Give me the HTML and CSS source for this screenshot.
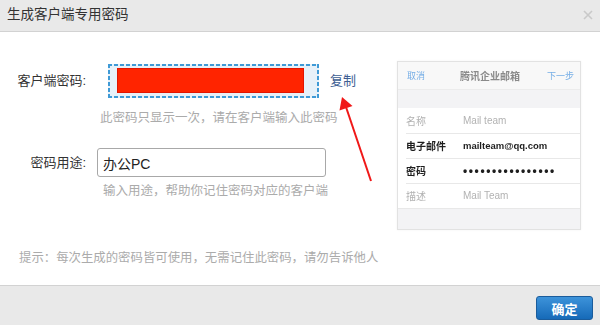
FILE: index.html
```html
<!DOCTYPE html>
<html lang="zh-CN">
<head>
  <meta charset="UTF-8" />
  <title>生成客户端专用密码</title>
  <link rel="stylesheet" href="styles.css">
</head>
<body>

  <div class="dialog">
    <div class="dialog-header">
      <span class="dialog-title">生成客户端专用密码</span>
      <span class="close-btn">
        <svg width="10" height="10" viewBox="0 0 10 10">
          <path d="M1 1 L9 9 M9 1 L1 9" stroke="#c9c9c9" stroke-width="1.6" fill="none" />
        </svg>
      </span>
    </div>

    <div class="dialog-body">
      <div class="form">
        <div class="form-row">
          <label class="form-label">客户端密码:</label>
          <div class="pwd-box"><div class="pwd-mask"></div></div>
          <a class="copy-link">复制</a>
        </div>
        <p class="form-hint hint-pwd">此密码只显示一次，请在客户端输入此密码</p>

        <div class="form-row row-usage">
          <label class="form-label">密码用途:</label>
          <input class="usage-input" type="text" value="办公PC">
        </div>
        <p class="form-hint hint-usage">输入用途，帮助你记住密码对应的客户端</p>

        <p class="tip">提示：每次生成的密码皆可使用，无需记住此密码，请勿告诉他人</p>
      </div>

      <!-- phone mail setup preview -->
      <div class="preview">
        <div class="preview-nav">
          <span class="nav-cancel">取消</span>
          <span class="nav-title">腾讯企业邮箱</span>
          <span class="nav-next">下一步</span>
        </div>
        <div class="preview-band"></div>
        <div class="preview-row muted">
          <span class="row-key">名称</span><span class="row-val">Mail team</span>
        </div>
        <div class="preview-row strong">
          <span class="row-key">电子邮件</span><span class="row-val">mailteam@qq.com</span>
        </div>
        <div class="preview-row strong">
          <span class="row-key">密码</span><span class="row-val dots">••••••••••••••••</span>
        </div>
        <div class="preview-row muted">
          <span class="row-key">描述</span><span class="row-val">Mail Team</span>
        </div>
        <div class="preview-bottom"></div>
      </div>
    </div>

    <div class="dialog-footer">
      <button class="btn-primary">确定</button>
    </div>

    <svg class="arrow" width="600" height="325" viewBox="0 0 600 325">
      <line x1="371" y1="181" x2="346" y2="107" stroke="#f01818" stroke-width="2" />
      <polygon points="342,97 352.5,106 339.5,110.5" fill="#f01818" />
    </svg>
  </div>

</body>
</html>
```

FILE: styles.css
```css
* {
  margin: 0;
  padding: 0;
  box-sizing: border-box;
}

body {
  font-family: "Liberation Sans", "Noto Sans CJK SC", sans-serif;
  color: #333;
  background: #fff;
}

.dialog {
  position: relative;
  width: 600px;
  height: 325px;
  display: flex;
  flex-direction: column;
  overflow: hidden;
}

/* header */
.dialog-header {
  height: 32px;
  background: #e9e9e9;
  border-bottom: 1px solid #d2d2d2;
  display: flex;
  align-items: center;
  justify-content: space-between;
  padding: 0 7px 2px 7px;
}

.dialog-title {
  font-size: 13.5px;
  line-height: 18px;
  color: #333;
}

.close-btn {
  display: flex;
  margin-top: 1px;
}

/* body */
.dialog-body {
  flex: 1;
  display: flex;
}

.form {
  flex: 1;
  padding-top: 32px;
}

.form-row {
  display: flex;
  align-items: center;
}

.form-label {
  width: 86px;
  text-align: right;
  font-size: 13px;
  line-height: 18px;
  color: #333;
}

.pwd-box {
  width: 211px;
  height: 34px;
  margin-left: 22px;
  padding: 4px 15px 5px 9px;
  background:
    repeating-linear-gradient(90deg, #3f9ad6 0 4px, transparent 4px 6px) top / 100% 2px no-repeat,
    repeating-linear-gradient(90deg, #3f9ad6 0 4px, transparent 4px 6px) bottom / 100% 2px no-repeat,
    repeating-linear-gradient(180deg, #3f9ad6 0 4px, transparent 4px 6px) left / 2px 100% no-repeat,
    repeating-linear-gradient(180deg, #3f9ad6 0 4px, transparent 4px 6px) right / 2px 100% no-repeat,
    #e7f1f9;
}

.pwd-mask {
  height: 100%;
  background: #ff2400;
  border: 1px solid #e31500;
}

.copy-link {
  margin-left: 11px;
  font-size: 13px;
  line-height: 18px;
  color: #3d5e93;
  cursor: pointer;
}

.form-hint {
  font-size: 12.5px;
  line-height: 18px;
  color: #ababab;
}

.hint-pwd {
  margin: 11px 0 0 100px;
}

.row-usage {
  margin-top: 21px;
}

.usage-input {
  width: 229px;
  height: 29px;
  margin-left: 11px;
  padding: 0 5px;
  border: 1px solid #a8a8a8;
  border-radius: 3px;
  font-family: "Liberation Sans", "Noto Sans CJK SC", sans-serif;
  font-size: 14px;
  color: #222;
  outline: none;
}

.hint-usage {
  margin: 5px 0 0 103px;
}

.tip {
  margin: 49px 0 0 19px;
  font-size: 12.4px;
  line-height: 18px;
  color: #ababab;
}

/* preview */
.preview {
  width: 184px;
  height: 169px;
  margin: 29px 19px 0 0;
  border: 1px solid #e2e2e2;
  background: #f3f3f5;
  box-shadow: 0 0 2px rgba(0, 0, 0, 0.06);
  filter: blur(0.25px);
  display: flex;
  flex-direction: column;
}

.preview-nav {
  height: 28px;
  background: #f8f8f8;
  border-bottom: 1px solid #ececec;
  display: flex;
  align-items: center;
  justify-content: space-between;
  padding: 0 6px 0 9px;
  font-size: 9px;
}

.nav-cancel,
.nav-next {
  color: #76aee6;
}

.nav-title {
  font-size: 10px;
  font-weight: bold;
  color: #8a8a8a;
  margin-left: 8px;
}

.preview-band {
  height: 18px;
}

.preview-row {
  height: 25px;
  background: #fff;
  display: flex;
  align-items: center;
  padding-left: 8px;
  font-size: 10px;
  position: relative;
}

.preview-row + .preview-row::before {
  content: '';
  position: absolute;
  top: 0;
  left: 8px;
  right: 0;
  border-top: 1px solid #e8e8e8;
}

.row-key {
  width: 57px;
}

.muted {
  color: #b2b2b2;
}

.strong {
  color: #1e1e1e;
  font-weight: bold;
}

.strong .row-val {
  font-size: 9.5px;
}

.strong .dots {
  font-size: 12px;
  letter-spacing: 1.6px;
}

.preview-bottom {
  flex: 1;
  border-top: 1px solid #e8e8e8;
}

/* footer */
.dialog-footer {
  height: 40px;
  background: #e9e9e9;
  border-top: 1px solid #d2d2d2;
  display: flex;
  justify-content: flex-end;
  padding: 10px 7px 0 0;
}

.btn-primary {
  width: 57px;
  height: 24px;
  border: 1px solid #1a5c9c;
  border-radius: 3px;
  background: linear-gradient(#3d93da, #166ab8);
  color: #fff;
  font-family: "Liberation Sans", "Noto Sans CJK SC", sans-serif;
  font-size: 13px;
  font-weight: bold;
  cursor: pointer;
}

.arrow {
  position: absolute;
  top: 0;
  left: 0;
  pointer-events: none;
}
```
